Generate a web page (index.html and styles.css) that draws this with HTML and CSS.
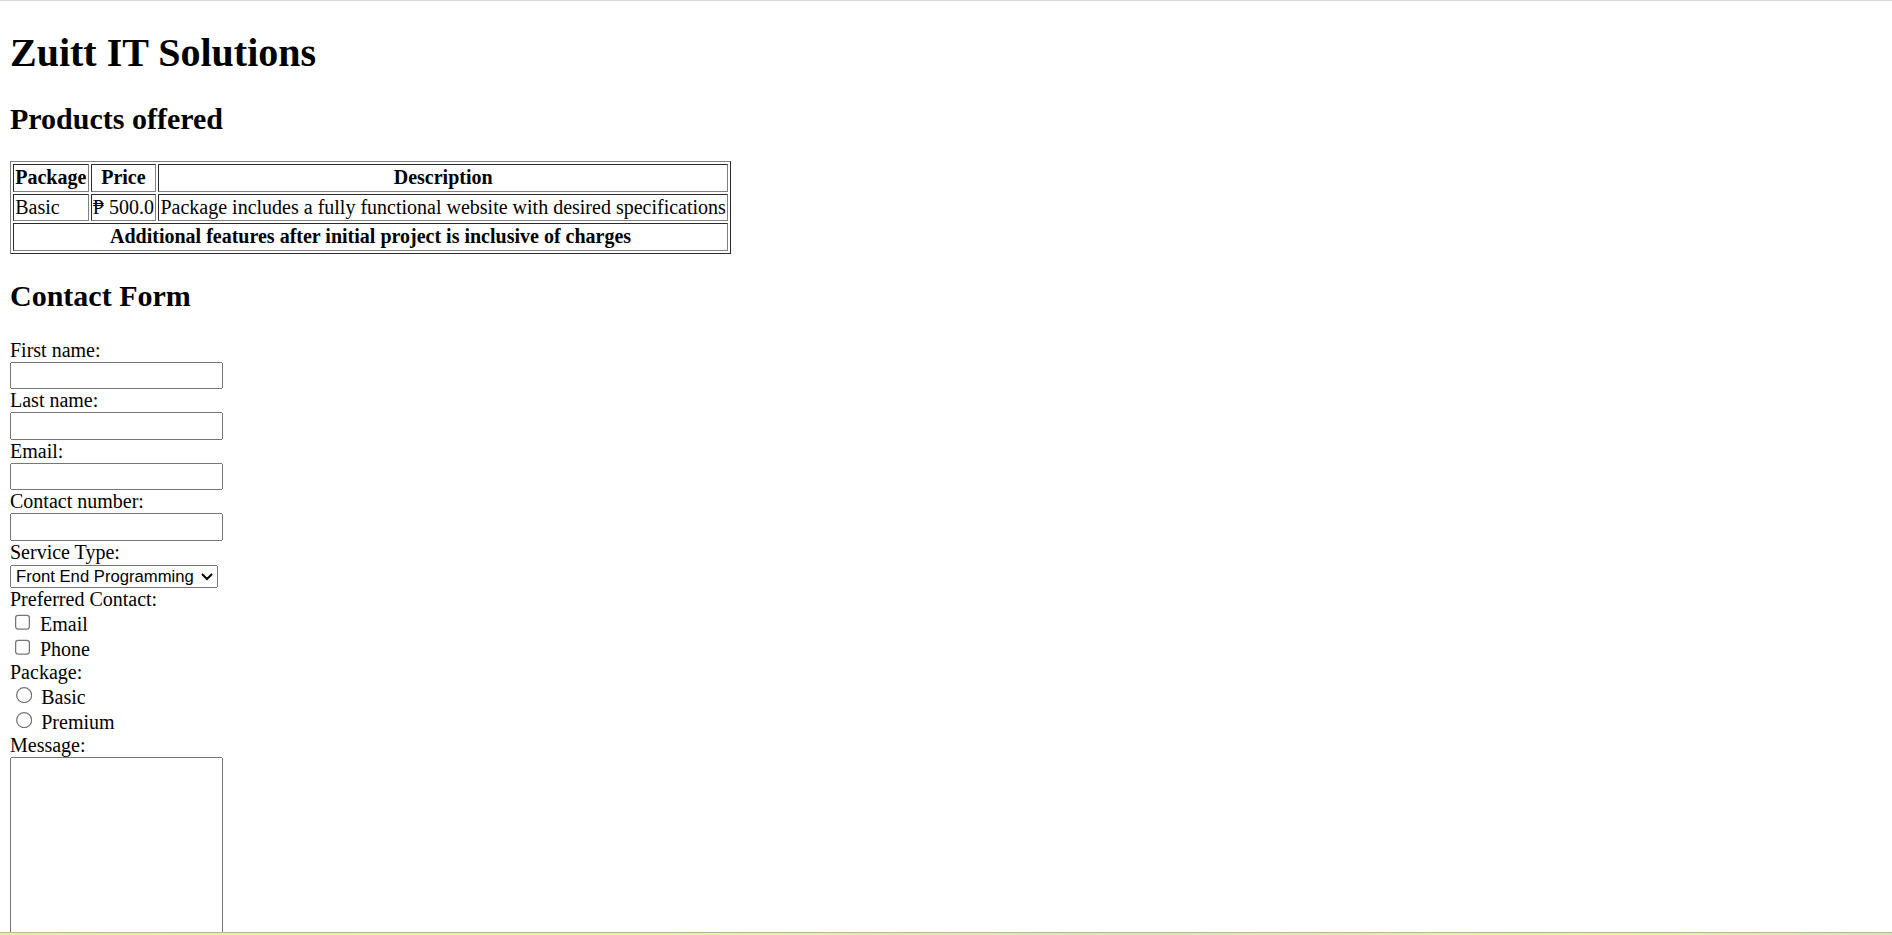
FILE: index.html
```html
<!DOCTYPE html>
<html>
<head>
    <meta charset="UTF-8">
    <title>Zuitt IT Solutions</title>
    <link rel="stylesheet" href="styles.css">
</head>
<body>
    <h1>Zuitt IT Solutions</h1>

    <h2>Products offered</h2>
    <table border="1">
        <tr>
            <th>Package</th>
            <th>Price</th>
            <th>Description</th>
        </tr>
        <tr>
            <td>Basic</td>
            <td>&#8369; 500.0</td>
            <td>Package includes a fully functional website with desired specifications</td>
        </tr>
        <tr>
            <th colspan="3">Additional features after initial project is inclusive of charges</th>
        </tr>
    </table>

    <h2>Contact Form</h2>
    <form>
        <label for="firstname">First name:</label><br>
        <input type="text" id="firstname"><br>
        <label for="lastname">Last name:</label><br>
        <input type="text" id="lastname"><br>
        <label for="email">Email:</label><br>
        <input type="email" id="email"><br>
        <label for="contact">Contact number:</label><br>
        <input type="text" id="contact"><br>
        <label for="service">Service Type:</label><br>
        <select id="service">
            <option>Front End Programming</option>
            <option>Back End Programming</option>
            <option>Full Stack Programming</option>
        </select><br>
        <label>Preferred Contact:</label><br>
        <input type="checkbox" id="byemail"> <label for="byemail">Email</label><br>
        <input type="checkbox" id="byphone"> <label for="byphone">Phone</label><br>
        <label>Package:</label><br>
        <input type="radio" name="package" id="basic"> <label for="basic">Basic</label><br>
        <input type="radio" name="package" id="premium"> <label for="premium">Premium</label><br>
        <label for="message">Message:</label><br>
        <textarea id="message" rows="12"></textarea>
    </form>

    <!-- strip along the bottom edge of the window -->
    <div class="bottom-strip"></div>
</body>
</html>
```

FILE: styles.css
```css
html {
    border-top: 1px solid #dadada;
    }
body {
    zoom: 1.25;
    font-family: "Liberation Serif", serif;
    color: #000000;
    background-color: #FFFFFF;
    }
h1 {
    margin-top: 14px;
    }
table {
    margin-bottom: 1px;
    }
form {
    padding-top: 1px;
    }
input, select {
    font-family: "Liberation Sans", sans-serif;
    font-size: 13.333px;
    }
input[type="text"], input[type="email"] {
    box-sizing: border-box;
    width: 170px;
    height: 22px;
    }
select {
    width: 166px;
    }
textarea {
    box-sizing: border-box;
    width: 170px;
    font-family: "Liberation Mono", monospace;
    font-size: 13.333px;
    }
.bottom-strip {
    position: fixed;
    left: 0;
    right: 0;
    bottom: 0;
    height: 2px;
    border-top: 1px solid #b4b89a;
    background: linear-gradient(to right, #e6eea0, #eef5a0 30%, #dfe6b0 60%, #eef59c 85%, #dde4b4);
    zoom: 0.8;
    }
```
